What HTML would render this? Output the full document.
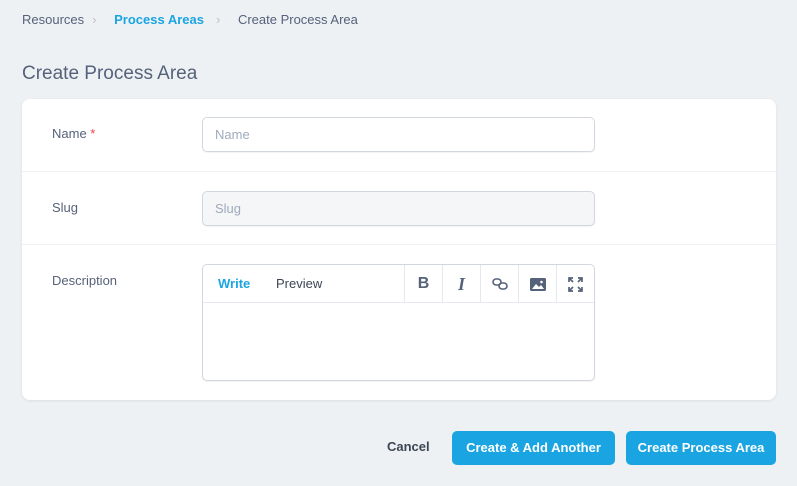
<!DOCTYPE html>
<html><head><style>
*{box-sizing:border-box;margin:0;padding:0}
body{width:797px;height:486px;background:#eef1f4;font-family:"Liberation Sans",sans-serif;color:#3c4655;position:relative;overflow:hidden}
.a{position:absolute}
.bc{top:12px;left:22px;font-size:13px;color:#56627a;line-height:16px}
.bc span{margin-right:8px}
.card{left:22px;top:99px;width:754px;height:301px;background:#fff;border-radius:8px;box-shadow:0 1px 3px rgba(0,0,0,.08)}
.row{position:absolute;left:0;width:754px;border-top:1px solid #eef1f4}
.lbl{position:absolute;left:30px;font-size:13px;color:#56627a}
.inp{position:absolute;left:180px;width:393px;height:35px;border:1px solid #d2d7df;border-radius:5px;font-size:13px;color:#a0aabb;padding:9px 12px;box-shadow:0 1px 1px rgba(0,0,0,.05)}
.btn{position:absolute;top:431px;height:34px;background:#1aa5e2;color:#fff;font-weight:bold;font-size:13px;border-radius:5px;text-align:center;line-height:34px}
.tb{position:absolute;top:0;width:38px;height:38px;border-left:1px solid #e5e9ef;display:flex;align-items:center;justify-content:center;color:#56627a;font-weight:bold;font-size:16px}
</style></head><body>
<div class="a bc"><span>Resources</span><span style="color:#b8c1cc">›</span> <span style="color:#1aa5e2;font-weight:bold;margin-left:6px">Process Areas</span><span style="color:#b8c1cc;margin-left:4px">›</span> <span style="margin-left:6px">Create Process Area</span></div>
<div class="a" style="top:63px;left:22px;font-size:19px;color:#56627a">Create Process Area</div>
<div class="a card">
 <div class="lbl" style="top:27px">Name <span style="color:#e74444">*</span></div>
 <div class="inp" style="top:18px">Name</div>
 <div class="row" style="top:72px"></div>
 <div class="lbl" style="top:101px">Slug</div>
 <div class="inp" style="top:92px;background:#f4f6f8">Slug</div>
 <div class="row" style="top:145px"></div>
 <div class="lbl" style="top:174px">Description</div>
 <div class="inp" style="top:165px;height:117px;padding:0;overflow:hidden">
  <div style="position:absolute;top:0;left:0;right:0;height:38px;border-bottom:1px solid #e5e9ef"></div>
  <div style="position:absolute;top:11px;left:15px;font-size:13px;color:#1aa5e2;font-weight:bold">Write</div>
  <div style="position:absolute;top:11px;left:73px;font-size:13px;color:#3c4655">Preview</div>
  <div class="tb" style="left:201px">B</div>
  <div class="tb" style="left:239px;font-style:italic;font-family:'Liberation Serif',serif;font-size:18px">I</div>
  <div class="tb" style="left:277px"><svg width="16" height="14" viewBox="0 0 16 14" fill="none" stroke="#56627a" stroke-width="1.6"><rect x="1" y="2" width="8" height="6" rx="3"/><rect x="7" y="6" width="8" height="6" rx="3"/></svg></div>
  <div class="tb" style="left:315px"><svg width="16" height="13" viewBox="0 0 16 13"><rect width="16" height="13" rx="1.5" fill="#56627a"/><path d="M2 11l4-5 3 3 2-2 3 4z" fill="#fff"/><circle cx="11.5" cy="4" r="1.3" fill="#fff"/></svg></div>
  <div class="tb" style="left:353px"><svg width="15" height="15" viewBox="0 0 15 15" fill="none" stroke="#56627a" stroke-width="1.7"><path d="M1 5V1h4M10 1h4v4M14 10v4h-4M5 14H1v-4M1 1l4 4M14 1l-4 4M14 14l-4-4M1 14l4-4"/></svg></div>
 </div>
</div>
<div class="a" style="top:439px;left:387px;font-size:13px;font-weight:bold;color:#3c4655">Cancel</div>
<div class="btn" style="left:452px;width:163px">Create &amp; Add Another</div>
<div class="btn" style="left:626px;width:150px">Create Process Area</div>
</body></html>
